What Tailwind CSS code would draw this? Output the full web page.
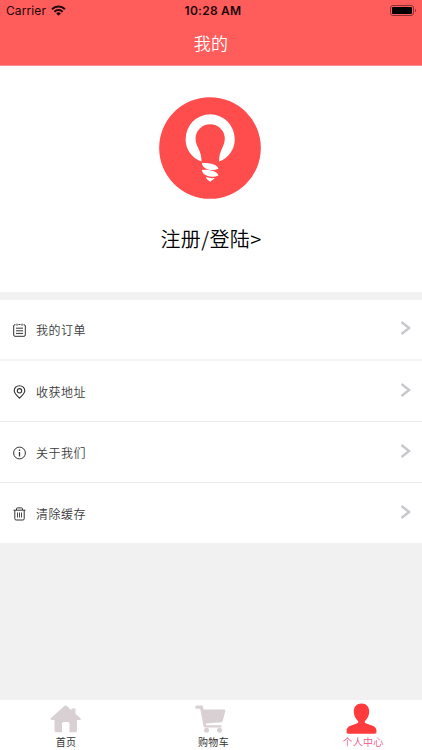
<!DOCTYPE html>
<html lang="zh-CN">
<head>
    <meta charset="UTF-8">
    <meta name="viewport" content="width=device-width, initial-scale=1.0">
    <title>我的</title>
    <script src="https://cdn.jsdelivr.net/npm/@tailwindcss/browser@4"></script>
</head>
<body class="bg-[#f1f1f1] font-['Noto_Sans_CJK_SC',sans-serif]">
    <div class="w-[422px] h-[750px] flex flex-col overflow-hidden">
        <!-- Header -->
        <header class="h-[66px] shrink-0 bg-[#ff5c5c] border-b border-[#ff8f8f]">
            <div class="h-[22px] grid grid-cols-3 items-center pl-[6px] pr-[5px] text-[#1c0808] font-['Inter',sans-serif]">
                <div class="flex items-center gap-[5px]">
                    <span class="text-[12px] leading-none tracking-[0.1px]">Carrier</span>
                    <svg class="w-[15px] h-[11px] -mt-px" viewBox="0 0 15 11" fill="none" stroke="currentColor" stroke-width="2">
                        <path d="M1 4.2a9.2 9.2 0 0 1 13 0M3.4 6.7a5.8 5.8 0 0 1 8.2 0" />
                        <path d="M5.2 8.4a3.3 3.3 0 0 1 4.6 0L7.5 10.8z" fill="currentColor" stroke="none" />
                    </svg>
                </div>
                <span class="text-center pl-[3px] text-[12px] leading-none font-semibold tracking-[0.25px] whitespace-nowrap">10:28 AM</span>
                <svg class="w-[27px] h-[11px] justify-self-end -mt-px" viewBox="0 0 27 11">
                    <rect x="0.5" y="0.5" width="23" height="10" rx="2.5" fill="none" stroke="#8b3030" />
                    <rect x="2" y="2" width="20" height="7" rx="1" fill="#000" />
                    <path d="M25 3.7a2 2 0 0 1 0 3.6z" fill="#8b3030" />
                </svg>
            </div>
            <h1 class="h-[42px] flex items-center justify-center text-[17px] font-[350] text-white tracking-[0.3px]">我的</h1>
        </header>

        <!-- Profile -->
        <section class="h-[226px] shrink-0 bg-white flex flex-col items-center pt-[31px]">
            <svg class="w-[102px] h-[102px] mr-[2px]" viewBox="27 20 307 307">
                <circle cx="180.5" cy="173.5" r="153" fill="#ff4c4c" />
                <path d="M155 214C125 203 107 178 107 147a74 75 0 0 1 148 0C255 178 237 203 208 214C207 181 225 170 225 145a44 43 0 0 0-88 0C137 170 156 181 155 214z" fill="#fff" />
                <path d="M156 219c21-1 46 3 50 17-9 4-22 5-32 2-11-3-17-9-18-19z" fill="#fff" />
                <path d="M156 239c21-1 46 3 50 17-9 4-22 5-32 2-11-3-17-9-18-19z" fill="#fff" />
                <path d="M168 261c8 3 17 4 26 3-1 4-4 5-6 6l-7 5-7-5c-2-2-5-4-6-9z" fill="#fff" />
            </svg>
            <a href="#" class="mt-[25px] text-[20px] leading-[30px] font-[350] text-black tracking-[0.4px]">注册/登陆&gt;</a>
        </section>

        <!-- Menu -->
        <nav class="mt-2 shrink-0 bg-white text-[12px] font-[350] text-[#3c3c3c] tracking-[0.5px]">
            <a href="#" class="h-[61px] flex items-center pl-[13px] pr-[11px] border-b-2 border-[#f4f4f4]">
                <svg class="w-[13px] h-[14px] mt-px" viewBox="0 0 13 14" fill="none" stroke="#333">
                    <path d="M2.5 1.7H2A1.3 1.3 0 0 0 .7 3v9A1.3 1.3 0 0 0 2 13.3h9a1.3 1.3 0 0 0 1.3-1.3V3A1.3 1.3 0 0 0 11 1.7h-.5M5.5 1.5h2" />
                    <path d="M4 .7v2M9 .7v2M3 5.2h7M3 7.8h7M3 10.4h7" />
                </svg>
                <span class="ml-[10px] grow">我的订单</span>
                <svg class="w-[11px] h-[14px] -mt-1" viewBox="0 0 11 14" fill="none" stroke="#c7c7cc" stroke-width="2.4"><path d="M1.5 1l7.6 6-7.6 6" /></svg>
            </a>
            <a href="#" class="h-[61px] flex items-center pt-px pl-[13px] pr-[11px] border-b border-[#ececec]">
                <svg class="w-[13px] h-[14px] mt-px" viewBox="0 0 13 14" fill="none" stroke="#333" stroke-width="1.1">
                    <path d="M6.5 13.2C3.3 10.3 1.2 8.3 1.2 5.8a5.3 5.1 0 0 1 10.6 0c0 2.5-2.1 4.5-5.3 7.4z" />
                    <circle cx="6.5" cy="5.8" r="2.2" />
                </svg>
                <span class="ml-[10px] grow">收获地址</span>
                <svg class="w-[11px] h-[14px] -mt-[3px]" viewBox="0 0 11 14" fill="none" stroke="#c7c7cc" stroke-width="2.4"><path d="M1.5 1l7.6 6-7.6 6" /></svg>
            </a>
            <a href="#" class="h-[61px] flex items-center pt-px pl-[13px] pr-[11px] border-b border-[#ececec]">
                <svg class="w-[13px] h-[14px] mt-px" viewBox="0 0 13 14" fill="none" stroke="#333">
                    <circle cx="6.5" cy="7" r="5.9" />
                    <path d="M6.5 6v4.4M6.5 3.6v1.3" stroke-width="1.3" />
                </svg>
                <span class="ml-[10px] grow">关于我们</span>
                <svg class="w-[11px] h-[14px] -mt-[3px]" viewBox="0 0 11 14" fill="none" stroke="#c7c7cc" stroke-width="2.4"><path d="M1.5 1l7.6 6-7.6 6" /></svg>
            </a>
            <a href="#" class="h-[60px] flex items-center pt-px pl-[13px] pr-[11px]">
                <svg class="w-[13px] h-[14px] mt-px" viewBox="0 0 13 14" fill="none" stroke="#333">
                    <path d="M.5 3.2h12M3.5 3V1.8A.9.9 0 0 1 4.4.9h4.2a.9.9 0 0 1 .9.9V3M1.8 3.2v8.6A1.3 1.3 0 0 0 3.1 13h6.8a1.3 1.3 0 0 0 1.3-1.2V3.2" />
                    <path d="M4.5 5.5v5M6.5 5.5v5M8.5 5.5v5" stroke-width=".9" />
                </svg>
                <span class="ml-[10px] grow">清除缓存</span>
                <svg class="w-[11px] h-[14px] -mt-[3px]" viewBox="0 0 11 14" fill="none" stroke="#c7c7cc" stroke-width="2.4"><path d="M1.5 1l7.6 6-7.6 6" /></svg>
            </a>
        </nav>

        <!-- Tab bar -->
        <footer class="mt-auto h-[50px] shrink-0 bg-white flex justify-between pl-[38px] pr-[32px] text-[10px] leading-[14px] text-[#333]">
            <a href="#" class="w-[54px] flex flex-col items-center pt-[5px]">
                <svg class="w-[31px] h-[28px]" viewBox="0 0 31 28" fill="#d8d0d3">
                    <path d="M14 1.2a2.2 2.2 0 0 1 3 0l4.500 4V3.500h4V8.800l4.700 4.300c1 1 .5 1.900-.7 1.900H27v10.200a2 2 0 0 1-2 2h-5.500v-8.700a1.500 1.500 0 0 0-1.500-1.500h-4.500a1.500 1.500 0 0 0-1.500 1.500v8.700H6.500a2 2 0 0 1-2-2V15H1.800c-1.300 0-1.700-1-.7-1.900z" />
                </svg>
                <span class="mt-[2px] ml-[2px] tracking-[0.3px]">首页</span>
            </a>
            <a href="#" class="w-[54px] flex flex-col items-center pt-[5px]">
                <svg class="w-[31px] h-[28px] mr-[7px]" viewBox="0 0 31 28" fill="#d8d0d3">
                    <path d="M1.800.5h4.700c.9 0 1.300.4 1.500 1.200L8.600 4.500H29c1 0 1.500.6 1.300 1.500l-2.500 9.800c-.2.900-.8 1.300-1.700 1.400l-15.300 1.200.4 1.800h15.300v2.400H11c-1.500 0-2.200-.5-2.500-1.900L5.200 3.700H1.800A1.600 1.600 0 0 1 1.800.5z" />
                    <circle cx="11.500" cy="25.200" r="2.500" />
                    <circle cx="24.500" cy="25.200" r="2.500" />
                </svg>
                <span class="mt-[2px] mr-px tracking-[0.3px]">购物车</span>
            </a>
            <a href="#" class="w-[54px] flex flex-col items-center pt-[3px] text-[#ef5487]">
                <svg class="w-[31px] h-[31px] mr-[3px]" viewBox="0 0 31 31" fill="#ff3b3e">
                    <path d="M15.500.5c4.700 0 7.700 3.200 7.700 8 0 3.900-1.600 6.900-4 9.300-.8 1-.6 2 .5 2.500l7.500 2.800c2.500 1 3.400 3.300 3.300 5.500 0 1.500-.7 2.200-2 2.200h-26c-1.300 0-2-.7-2-2.200 0-2.200.9-4.500 3.300-5.500l7.500-2.800c1.100-.5 1.300-1.500.5-2.500-2.400-2.400-4-5.400-4-9.300 0-4.800 3-8 7.700-8z" />
                </svg>
                <span class="mt-px font-[350] tracking-[0.3px]">个人中心</span>
            </a>
        </footer>
    </div>
</body>
</html>
